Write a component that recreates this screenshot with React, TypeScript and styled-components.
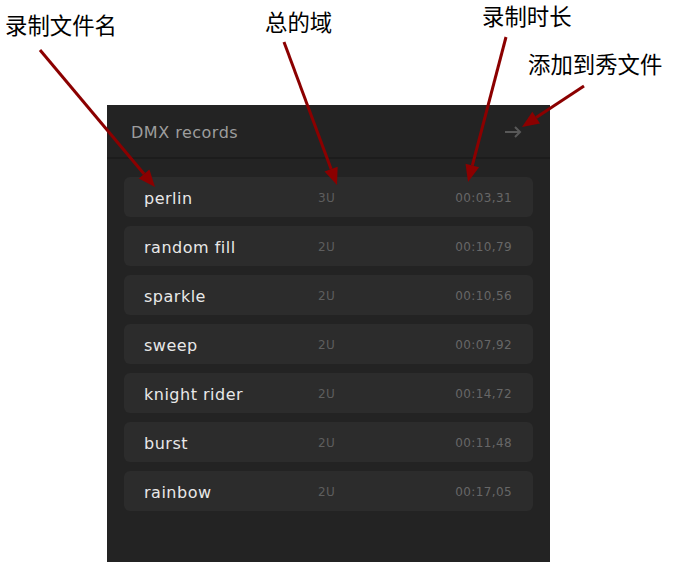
import styled, { createGlobalStyle } from 'styled-components'

const GlobalStyle = createGlobalStyle`
  html, body {
    margin: 0;
    padding: 0;
    background: #fff;
  }
  * { box-sizing: border-box; }
`

const Page = styled.div`
  position: relative;
  width: 678px;
  height: 570px;
  padding: 105px 0 0 107px;
  overflow: hidden;
`

const Panel = styled.div`
  width: 443px;
  height: 457px;
  background: #232323;
  display: flex;
  flex-direction: column;
  font-family: "DejaVu Sans", "Noto Sans", sans-serif;
`

const Header = styled.div`
  height: 54px;
  display: flex;
  align-items: center;
  justify-content: space-between;
  padding: 2px 28px 0 24px;
  border-bottom: 2px solid #1c1c1c;
`

const Title = styled.span`
  font-size: 16px;
  color: #9d9d9d;
  letter-spacing: 0.5px;
`

const List = styled.div`
  display: flex;
  flex-direction: column;
  gap: 9px;
  padding: 18px 17px 0 17px;
`

const Row = styled.div`
  height: 40px;
  border-radius: 6px;
  background: #2c2c2c;
  display: grid;
  grid-template-columns: 174px 1fr auto;
  align-items: center;
  padding: 2px 21px 0 20px;
`

const Name = styled.span`
  font-size: 16px;
  letter-spacing: 0.5px;
  color: #e8e8e8;
`

const Universes = styled.span`
  font-size: 12px;
  letter-spacing: 0.3px;
  color: #5e5e5e;
`

const Duration = styled.span`
  font-size: 12px;
  letter-spacing: 0.4px;
  color: #676767;
`

const Label = styled.span<{ $x: number; $y: number }>`
  position: absolute;
  left: ${p => p.$x}px;
  top: ${p => p.$y}px;
  font-family: "Noto Sans CJK SC", sans-serif;
  font-size: 22.4px;
  line-height: 1;
  color: #000;
  white-space: nowrap;
`

const Overlay = styled.svg`
  position: absolute;
  left: 0;
  top: 0;
  pointer-events: none;
`

const records = [
  { name: 'perlin', u: '3U', t: '00:03,31' },
  { name: 'random fill', u: '2U', t: '00:10,79' },
  { name: 'sparkle', u: '2U', t: '00:10,56' },
  { name: 'sweep', u: '2U', t: '00:07,92' },
  { name: 'knight rider', u: '2U', t: '00:14,72' },
  { name: 'burst', u: '2U', t: '00:11,48' },
  { name: 'rainbow', u: '2U', t: '00:17,05' },
]

const arrows = [
  { x1: 40, y1: 50, x2: 155, y2: 187 },
  { x1: 284, y1: 42, x2: 337, y2: 185 },
  { x1: 506, y1: 37, x2: 468, y2: 182 },
  { x1: 584, y1: 86, x2: 522, y2: 127 },
]

function Arrow({ x1, y1, x2, y2 }: { x1: number; y1: number; x2: number; y2: number }) {
  const a = Math.atan2(y2 - y1, x2 - x1)
  const len = 17
  const w = 7
  const bx = x2 - len * Math.cos(a)
  const by = y2 - len * Math.sin(a)
  const px = -Math.sin(a) * w
  const py = Math.cos(a) * w
  return (
    <g>
      <line x1={x1} y1={y1} x2={bx} y2={by} stroke="#8b0000" strokeWidth={3} />
      <polygon
        points={`${x2},${y2} ${bx + px},${by + py} ${bx - px},${by - py}`}
        fill="#8b0000"
      />
    </g>
  )
}

export default function App() {
  return (
    <>
      <GlobalStyle />
      <Page>
        <Panel>
          <Header>
            <Title>DMX records</Title>
            <svg width="17" height="12" viewBox="0 0 17 12" fill="none" stroke="#585858" strokeWidth="2">
              <path d="M0 6h15M10 1l5 5-5 5" />
            </svg>
          </Header>
          <List>
            {records.map(r => (
              <Row key={r.name}>
                <Name>{r.name}</Name>
                <Universes>{r.u}</Universes>
                <Duration>{r.t}</Duration>
              </Row>
            ))}
          </List>
        </Panel>

        <Label $x={5} $y={13}>录制文件名</Label>
        <Label $x={265} $y={10}>总的域</Label>
        <Label $x={482} $y={4}>录制时长</Label>
        <Label $x={528} $y={52}>添加到秀文件</Label>

        <Overlay width={678} height={570}>
          {arrows.map((a, i) => (
            <Arrow key={i} {...a} />
          ))}
        </Overlay>
      </Page>
    </>
  )
}
